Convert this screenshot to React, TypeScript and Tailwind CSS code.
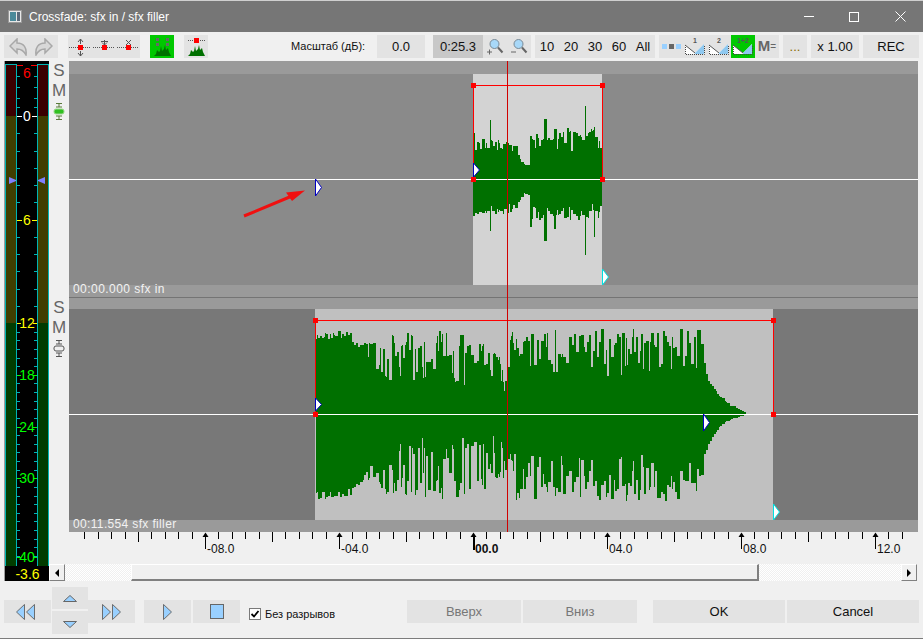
import * as React from "react";

type Pt = [number, number];

function lerpEnv(pts: Pt[], x: number) {
  if (x <= pts[0][0]) return pts[0][1];
  for (let i = 1; i < pts.length; i++) {
    if (x <= pts[i][0]) {
      const [x0, y0] = pts[i - 1];
      const [x1, y1] = pts[i];
      return y0 + ((y1 - y0) * (x - x0)) / (x1 - x0);
    }
  }
  return pts[pts.length - 1][1];
}

function rng(seed: number) {
  let a = seed;
  return () => {
    a = (a + 0x6d2b79f5) | 0;
    let t = Math.imul(a ^ (a >>> 15), 1 | a);
    t = (t + Math.imul(t ^ (t >>> 7), 61 | t)) ^ t;
    return ((t ^ (t >>> 14)) >>> 0) / 4294967296;
  };
}

interface WaveOpts {
  from: number;
  to: number;
  center: number;
  topLow: Pt[];
  topHigh: Pt[];
  botLow: Pt[];
  botHigh: Pt[];
  seed: number;
  notch: number;
  spikes?: [number, number, number][];
}

function amp(low: number, high: number, r1: number, r2: number, notch: number) {
  if (r1 < notch) return low + (high - low) * r2 * 0.4;
  return low + (high - low) * (0.45 + 0.55 * r2);
}

function wavePath(o: WaveOpts) {
  const r = rng(o.seed);
  let d = "";
  let x = o.from;
  while (x < o.to) {
    const w = Math.min(1 + Math.floor(r() * 2.4), o.to - x);
    let up = amp(lerpEnv(o.topLow, x), lerpEnv(o.topHigh, x), r(), r(), o.notch);
    let dn = amp(lerpEnv(o.botLow, x), lerpEnv(o.botHigh, x), r(), r(), o.notch);
    for (const s of o.spikes ?? []) {
      if (x <= s[0] && s[0] < x + w) {
        up = Math.max(up, s[1]);
        dn = Math.max(dn, s[2]);
      }
    }
    d += `M${x} ${Math.round(o.center - up)}h${w}V${Math.round(o.center + dn)}h${-w}z`;
    x += w;
  }
  return d;
}

const WAVE_A = wavePath({
  from: 473,
  to: 602,
  center: 179,
  seed: 11,
  notch: 0.15,
  topLow: [[473, 26], [490, 26], [515, 26], [522, 13], [529, 11], [530, 28], [598, 27], [602, 14]],
  topHigh: [[473, 42], [490, 42], [515, 34], [522, 16], [529, 14], [530, 50], [598, 52], [602, 20]],
  botLow: [[473, 24], [515, 24], [522, 14], [529, 14], [530, 22], [598, 22], [602, 14]],
  botHigh: [[473, 38], [515, 34], [522, 16], [529, 16], [530, 42], [598, 42], [602, 20]],
  spikes: [[474, 46, 32], [490, 59, 52], [530, 43, 48], [546, 60, 62], [554, 50, 50], [567, 44, 38], [585, 73, 76], [594, 52, 58]],
});

const WAVE_B = wavePath({
  from: 316,
  to: 746,
  center: 414,
  seed: 29,
  notch: 0.3,
  topLow: [[316, 74], [345, 76], [360, 62], [372, 46], [385, 32], [400, 34], [440, 30], [470, 27], [500, 24], [508, 22], [510, 50], [540, 38], [600, 38], [695, 42], [702, 48], [705, 40], [710, 28], [720, 16], [730, 8], [745, 2]],
  topHigh: [[316, 82], [345, 84], [360, 78], [372, 72], [385, 66], [390, 82], [420, 84], [470, 82], [500, 72], [505, 34], [510, 82], [530, 86], [700, 86], [702, 70], [705, 44], [710, 32], [720, 18], [730, 9], [745, 2]],
  botLow: [[316, 78], [345, 76], [360, 56], [375, 44], [400, 24], [455, 20], [500, 22], [508, 24], [512, 38], [600, 38], [695, 42], [702, 46], [705, 36], [710, 26], [720, 11], [730, 5], [745, 1]],
  botHigh: [[316, 85], [345, 85], [360, 76], [375, 66], [385, 80], [420, 87], [455, 84], [500, 70], [508, 62], [512, 86], [700, 88], [702, 66], [705, 40], [710, 28], [720, 12], [730, 6], [745, 1]],
});

function Marker({ x, y, h, color }: { x: number; y: number; h: number; color: string }) {
  return (
    <path
      d={`M${x + 0.5} ${y}V${y + h}L${x + 6.5} ${y + h / 2}z`}
      fill="#fff"
      stroke={color}
      strokeWidth="1"
    />
  );
}

function Handle({ x, y }: { x: number; y: number }) {
  return <rect x={x - 2.5} y={y - 2.5} width="5" height="5" fill="#ff0000" />;
}

function Band({ className }: { className: string }) {
  return <div className={className} />;
}

function Tracks() {
  return (
    <div className="relative flex h-[471px] w-[849px] flex-col">
      <Band className="h-[13px] bg-[#9a9a9a]" />
      <div className="flex h-[211px] bg-[#8a8a8a]">
        <div className="ml-[404px] w-[129px] bg-[#d3d3d3]" />
      </div>
      <div className="flex h-[12px] items-start bg-[#9a9a9a] pl-1 text-[12px] leading-[8px] tracking-[0.45px] text-[#f2f2f2]">
        00:00.000 sfx in
      </div>
      <Band className="h-px bg-[#747474]" />
      <Band className="h-[11px] bg-[#9a9a9a]" />
      <div className="flex h-[211px] bg-[#787878]">
        <div className="ml-[246px] w-[458px] bg-[#c0c0c0]" />
      </div>
      <div className="flex h-[12px] items-start bg-[#9a9a9a] pl-1 text-[12px] leading-[9px] tracking-[0.35px] text-[#f2f2f2]">
        00:11.554 sfx filler
      </div>
      <svg className="absolute inset-0" width="849" height="471" viewBox="69 61 849 471">
        <path d={WAVE_A} fill="#007000" shapeRendering="crispEdges" />
        <path d={WAVE_B} fill="#007000" shapeRendering="crispEdges" />
        <g shapeRendering="crispEdges">
          <rect x="69" y="179" width="849" height="1" fill="#fff" />
          <rect x="69" y="414" width="849" height="1" fill="#fff" />
          <path d="M473.5 179V85.5H602.5V179" fill="none" stroke="#ff0000" />
          <path d="M315.5 414V320.5H773.5V414" fill="none" stroke="#ff0000" />
          <rect x="507" y="61" width="1" height="471" fill="#d00000" />
        </g>
        <Handle x={473.5} y={85.5} />
        <Handle x={602.5} y={85.5} />
        <Handle x={473.5} y={179.5} />
        <Handle x={602.5} y={179.5} />
        <Handle x={315.5} y={320.5} />
        <Handle x={773.5} y={320.5} />
        <Handle x={315.5} y={414.5} />
        <Handle x={773.5} y={414.5} />
        <Marker x={315} y={179} h={17} color="#0000c0" />
        <Marker x={473} y={163} h={14} color="#0000c0" />
        <Marker x={602} y={269} h={16} color="#00e0e0" />
        <Marker x={315} y={398} h={13} color="#0000c0" />
        <Marker x={703} y={414} h={17} color="#0000c0" />
        <Marker x={773} y={504} h={16} color="#00e0e0" />
        <path d="M244 216L292 196" stroke="#f01010" strokeWidth="3" />
        <path d="M305 190.500L286 192.500L292 201z" fill="#f01010" />
      </svg>
    </div>
  );
}

const RULER_LABELS: [number, string, boolean][] = [
  [205, "-08.0", false],
  [339, "-04.0", false],
  [473, "00.0", true],
  [607, "04.0", false],
  [741, "08.0", false],
  [875, "12.0", false],
];

function Ruler() {
  const ticks: number[] = [];
  for (let i = -29; i < 33; i++) ticks.push(473 + i * 13.4);
  return (
    <svg width="869" height="32" viewBox="49 532 869 32" className="block">
      {ticks.map((x, i) => {
        const n = i - 29;
        if (n % 10 === 0) return null;
        return (
          <rect
            key={i}
            x={Math.round(x)}
            y="532"
            width="1"
            height={n % 5 === 0 ? 10 : 7}
            fill="#000"
            shapeRendering="crispEdges"
          />
        );
      })}
      {RULER_LABELS.map(([x, t, bold]) => (
        <g key={t}>
          <rect x={x} y="535" width={bold ? 2 : 1} height={bold ? 15 : 14} fill="#000" shapeRendering="crispEdges" />
          <path d={`M${x + 0.5} 532.500L${x + 3.5} 537H${x - 2.500}z`} fill="#000" />
          <text x={x + 2} y="553" fontSize="12" fontWeight={bold ? 700 : 400} fill="#111">
            {t}
          </text>
        </g>
      ))}
    </svg>
  );
}

function ScrollArrow({ dir }: { dir: "l" | "r" }) {
  return (
    <div className="flex h-[17px] w-[16px] items-center justify-center border-t border-l border-t-white border-l-white border-r border-b border-r-[#808080] border-b-[#808080] bg-[#f0f0f0]">
      <svg width="6" height="8" viewBox="0 0 6 8">
        <path d={dir === "l" ? "M5 0V8L1 4z" : "M1 0V8L5 4z"} fill="#000" />
      </svg>
    </div>
  );
}

function Scrollbar() {
  const dither = "h-[17px] bg-[repeating-conic-gradient(#ffffff_0_25%,#f0f0f0_0_50%)] bg-[length:2px_2px]";
  return (
    <div className="flex h-[17px] w-[868px]">
      <ScrollArrow dir="l" />
      <div className={`w-[66px] ${dither}`} />
      <div className="h-[17px] w-[628px] border-t border-l border-t-white border-l-white border-r-2 border-b-2 border-r-[#808080] border-b-[#808080] bg-[#f0f0f0]" />
      <div className={`w-[142px] ${dither}`} />
      <ScrollArrow dir="r" />
    </div>
  );
}

const METER_MARKS: [number, string, string][] = [
  [73, "6", "#ff0000"],
  [116, "0", "#ffffff"],
  [220, "6", "#ffff00"],
  [323, "12", "#ffff00"],
  [375, "18", "#00ff00"],
  [427, "24", "#00ff00"],
  [478, "30", "#00ff00"],
  [557, "40", "#00ff00"],
];

function MeterChannel() {
  return (
    <div className="flex h-[502px] w-[12px] flex-col border border-b-0 border-[#00b4b4]">
      <div className="h-[51px] bg-[#3a0000]" />
      <div className="h-[207px] bg-[#403e00]" />
      <div className="flex-1 bg-[#003c00]" />
    </div>
  );
}

function Meter() {
  const minor: number[] = [76, 87, 98, 107];
  for (let i = 1; i <= 12; i++) minor.push(116 + Math.round(i * 17.25));
  for (let i = 1; i <= 28; i++) minor.push(323 + Math.round(i * 8.63));
  return (
    <div className="ml-1 flex h-[520px] w-[45px] flex-col border-l border-[#9c9c9c] bg-black">
      <div className="relative flex h-[505px] justify-between pt-[3px]">
        <MeterChannel />
        <MeterChannel />
        <svg className="absolute inset-0" width="44" height="505" viewBox="5 61 44 505">
          <g fill="#ff0000" shapeRendering="crispEdges">
            <rect x="17" y="65" width="6" height="1" />
            <rect x="31" y="65" width="6" height="1" />
          </g>
          {minor.filter((y) => y < 562).map((y) => (
            <g key={y} fill="#00b4b4" shapeRendering="crispEdges">
              <rect x="17" y={y} width="3" height="1" />
              <rect x="34" y={y} width="3" height="1" />
            </g>
          ))}
          {METER_MARKS.map(([y, t, c]) => (
            <g key={y} fill={c}>
              {y > 100 ? (
                <g shapeRendering="crispEdges">
                  <rect x="17" y={y} width={t.length > 1 ? 4 : 5} height="1" />
                  <rect x={t.length > 1 ? 33 : 32} y={y} width={t.length > 1 ? 4 : 5} height="1" />
                </g>
              ) : null}
              <text x="27" y={y + 5} fontSize="14" textAnchor="middle">
                {t}
              </text>
            </g>
          ))}
          <path d="M9 177V184L16 181V180z" fill="#8080ff" />
          <path d="M45 177V184L38 181V180z" fill="#8080ff" />
        </svg>
      </div>
      <div className="flex h-[15px] items-center justify-center pt-[1px] pl-[1px] text-[14px] leading-[14px] text-[#ffff00]">-3.6</div>
    </div>
  );
}

function Fader({ active }: { active: boolean }) {
  return (
    <svg width="12" height="17" viewBox="0 0 12 17" className="mt-[2px]">
      <path d="M3 .5H9M6 .5V4M3 4H9M3 13H9M6 13V16.500M3 16.500H9" stroke={active ? "#5a7a3a" : "#555"} fill="none" />
      <rect x="1" y="6" width="10" height="5" rx="2" fill={active ? "#30c020" : "#f0f0f0"} stroke={active ? "#a0d890" : "#555"} />
    </svg>
  );
}

function SoloMute({ height, active }: { height: string; active: boolean }) {
  return (
    <div className={`flex w-[20px] flex-col items-center text-[17px] leading-[20px] text-[#666] ${height}`}>
      <div>S</div>
      <div>M</div>
      <Fader active={active} />
    </div>
  );
}

function ToolBtn({ className = "", children }: { className?: string; children?: React.ReactNode }) {
  return (
    <div className={`flex h-[23px] shrink-0 items-center justify-center ${className}`}>{children}</div>
  );
}

function Dots({ y }: { y: number }) {
  return <path d={`M1 ${y}H23`} stroke="#555" strokeDasharray="1 1" shapeRendering="crispEdges" />;
}

function EnvIcon({ kind }: { kind: "both" | "down" | "cross" }) {
  return (
    <svg width="24" height="23" viewBox="0 0 24 23">
      <Dots y={12.5} />
      <rect x="10" y="10" width="5" height="5" fill="#ff0000" />
      {kind === "both" && (
        <path d="M12.500 4V9M10 7L12.500 4L15 7M12.500 16V21M10 18L12.500 21L15 18" stroke="#555" fill="none" />
      )}
      {kind === "down" && <path d="M12.500 5V10M10 7.500L12.500 10L15 7.500M9 6.500H16" stroke="#555" fill="none" />}
      {kind === "cross" && <path d="M10 5L15 10M15 5L10 10" stroke="#555" fill="none" />}
    </svg>
  );
}

function Peaks({ y = 16 }: { y?: number }) {
  return (
    <path
      d={`M4 ${y + 4}L6 ${y + 2}L7 ${y - 2}L9 ${y}L10 ${y - 1}L11 ${y - 6}L12 ${y - 1}L14 ${y - 3}L15 ${y - 7}L16 ${y - 2}L18 ${y - 4}L19 ${y}L21 ${y + 4}z`}
      fill="#007000"
    />
  );
}

function PeakIcon({ squares }: { squares: boolean }) {
  return (
    <svg width="24" height="23" viewBox="0 0 24 23">
      <Peaks y={17} />
      {squares ? (
        <g fill="#666">
          <rect x="6" y="3" width="3" height="3" />
          <rect x="16" y="3" width="3" height="3" />
          <rect x="6" y="8" width="3" height="3" />
          <rect x="16" y="8" width="3" height="3" />
        </g>
      ) : (
        <>
          <path d="M4 5.500H21" stroke="#555" strokeDasharray="1 1" />
          <rect x="10" y="3" width="5" height="5" fill="#ff0000" />
        </>
      )}
    </svg>
  );
}

function ZoomIcon({ sign }: { sign: "+" | "-" }) {
  return (
    <svg width="18" height="17" viewBox="0 0 18 17">
      <circle cx="8.500" cy="6" r="4.500" fill="#a8d8f8" stroke="#7a8a96" />
      <path d="M12 9.500L16.500 14.500" stroke="#666" strokeWidth="2" />
      <path d={sign === "+" ? "M1 14H6M3.500 11.500V16.500" : "M1 14H6"} stroke="#666" />
    </svg>
  );
}

function XfadeIcon({ label }: { label: string }) {
  return (
    <svg width="22" height="20" viewBox="0 0 22 20">
      <path d="M1 8L11 16L20 7V17H1z" fill="#ffffff" />
      <path d="M11 16L20 7V17H11z" fill="#8ec8f0" />
      <path d="M1.500 8V17.500H20.500V8" fill="none" stroke="#444" strokeDasharray="1 1" />
      <path d="M1 8L11 16" stroke="#555" />
      <text x="11" y="6" fontSize="7" textAnchor="middle" fill="#555" fontWeight="700">
        {label}
      </text>
    </svg>
  );
}

function Toolbar() {
  const arrow = "M8 1L1 8L8 15V11C12 11 15 13 17 17C18 10 15 5 8 5z";
  return (
    <div className="flex h-[29px] items-center bg-[#f0f0f0] pl-1 text-[13px] text-[#111]">
      <ToolBtn className="w-[54px] gap-[8px] bg-[#e3e3e3]">
        <svg width="18" height="18" viewBox="0 0 18 18">
          <path d={arrow} fill="#d8d8d8" stroke="#a8a8a8" strokeWidth="1.500" />
        </svg>
        <svg width="18" height="18" viewBox="0 0 18 18" className="-scale-x-100">
          <path d={arrow} fill="#d8d8d8" stroke="#a8a8a8" strokeWidth="1.500" />
        </svg>
      </ToolBtn>
      <ToolBtn className="ml-[10px] w-[72px] bg-[#e3e3e3]">
        <EnvIcon kind="both" />
        <EnvIcon kind="down" />
        <EnvIcon kind="cross" />
      </ToolBtn>
      <ToolBtn className="ml-[10px] w-[24px] bg-[#00c800]">
        <PeakIcon squares />
      </ToolBtn>
      <ToolBtn className="ml-[10px] w-[24px] bg-[#e3e3e3]">
        <PeakIcon squares={false} />
      </ToolBtn>
      <div className="ml-[83px] w-[86px] text-[11px]">Масштаб (дБ):</div>
      <ToolBtn className="w-[48px] bg-[#e3e3e3]">0.0</ToolBtn>
      <ToolBtn className="ml-2 w-[50px] bg-[#c8c8c8]">0:25.3</ToolBtn>
      <ToolBtn className="w-[48px] gap-[6px] bg-[#e3e3e3]">
        <ZoomIcon sign="+" />
        <ZoomIcon sign="-" />
      </ToolBtn>
      <div className="ml-1 grid h-[23px] w-[120px] shrink-0 grid-cols-5 items-center bg-[#e3e3e3] text-center">
        <span>10</span>
        <span>20</span>
        <span>30</span>
        <span>60</span>
        <span>All</span>
      </div>
      <ToolBtn className="ml-1 w-[24px] gap-[2px] bg-[#e3e3e3]">
        <div className="h-[5px] w-[5px] bg-[#99d0ff]" />
        <div className="h-[5px] w-[5px] bg-[#666]" />
        <div className="h-[5px] w-[5px] bg-[#99d0ff]" />
      </ToolBtn>
      <ToolBtn className="w-[24px] bg-[#e3e3e3]">
        <XfadeIcon label="1" />
      </ToolBtn>
      <ToolBtn className="w-[24px] bg-[#e3e3e3]">
        <XfadeIcon label="2" />
      </ToolBtn>
      <ToolBtn className="w-[24px] bg-[#00c800]">
        <XfadeIcon label="1+2" />
      </ToolBtn>
      <ToolBtn className="w-[24px] items-center bg-[#e3e3e3] text-[#666]">
        <span className="text-[15px] font-bold">M</span>
        <span className="text-[10px]">=</span>
      </ToolBtn>
      <ToolBtn className="ml-1 w-[24px] bg-[#e3e3e3] text-[#8a6a00]">...</ToolBtn>
      <ToolBtn className="ml-1 w-[48px] bg-[#e3e3e3]">x 1.00</ToolBtn>
      <ToolBtn className="ml-1 w-[56px] bg-[#e3e3e3]">REC</ToolBtn>
    </div>
  );
}

function Tri({ dir, h = 16 }: { dir: "l" | "r"; h?: number }) {
  const d = dir === "r" ? "M.5 .5V17.500L8.500 9z" : "M8.500 .5V17.500L.5 9z";
  return (
    <svg width="9" height={h} viewBox="0 0 9 18" preserveAspectRatio="none">
      <path d={d} fill="#99d0ff" stroke="#666" />
    </svg>
  );
}

function FootBtn({ className = "", children }: { className?: string; children?: React.ReactNode }) {
  return (
    <div className={`flex h-[23px] shrink-0 items-center justify-center bg-[#e3e3e3] ${className}`}>{children}</div>
  );
}

function BottomBar() {
  return (
    <div className="flex h-[58px] items-center border-b border-[#7c7c7c] bg-[#f0f0f0] pt-[4px] pl-1 text-[13px]">
      <FootBtn className="w-[47px] gap-px pr-[5px]">
        <Tri dir="l" />
        <Tri dir="l" />
      </FootBtn>
      <div className="ml-px flex w-[36px] flex-col gap-[2px] self-start pt-[2px]">
        <div className="flex h-[22px] items-center justify-center bg-[#e3e3e3]">
          <svg width="14" height="7" viewBox="0 0 14 7">
            <path d="M7 .5L13.500 6.500H.5z" fill="#99d0ff" stroke="#666" />
          </svg>
        </div>
        <div className="flex h-[23px] items-center justify-center bg-[#e3e3e3] pt-[3px]">
          <svg width="14" height="7" viewBox="0 0 14 7">
            <path d="M7 6.500L13.500 .5H.5z" fill="#99d0ff" stroke="#666" />
          </svg>
        </div>
      </div>
      <FootBtn className="w-[47px] gap-px pr-[1px]">
        <Tri dir="r" />
        <Tri dir="r" />
      </FootBtn>
      <FootBtn className="ml-[9px] w-[47px]">
        <Tri dir="r" />
      </FootBtn>
      <FootBtn className="ml-[2px] w-[47px]">
        <div className="h-[15px] w-[14px] border border-[#666] bg-[#99d0ff]" />
      </FootBtn>
      <div className="ml-[9px] mt-[5px] flex h-[12px] w-[12px] items-center justify-center border border-[#7a7a7a] bg-white">
        <svg width="10" height="10" viewBox="0 0 10 10">
          <path d="M1.500 5L4 7.500L8.500 2" fill="none" stroke="#000" strokeWidth="1.800" />
        </svg>
      </div>
      <div className="ml-[4px] mt-[6px] w-[142px] text-[11px] text-[#111]">Без разрывов</div>
      <FootBtn className="w-[114px] text-[#777]">Вверх</FootBtn>
      <FootBtn className="ml-[2px] w-[114px] text-[#777]">Вниз</FootBtn>
      <FootBtn className="ml-[16px] w-[132px] text-[#111]">OK</FootBtn>
      <FootBtn className="ml-[2px] w-[132px] text-[#111]">Cancel</FootBtn>
    </div>
  );
}

function TitleBar() {
  return (
    <div className="flex h-[31px] items-center bg-[#767676] text-[12px] text-white">
      <svg width="14" height="13" viewBox="0 0 14 13" className="ml-[8px] mr-[7px]">
        <rect x=".5" y=".5" width="13" height="12" fill="#e8e8e8" stroke="#999" />
        <rect x="2" y="2" width="6" height="9" fill="#4a8a9a" />
        <rect x="9" y="2" width="3" height="9" fill="#5a6a7a" />
      </svg>
      <span>Crossfade: sfx in / sfx filler</span>
      <div className="ml-auto flex h-full">
        <div className="flex w-[45px] items-center justify-center">
          <div className="h-px w-[10px] bg-white" />
        </div>
        <div className="flex w-[46px] items-center justify-center">
          <div className="h-[10px] w-[10px] border border-white" />
        </div>
        <div className="flex w-[46px] items-center justify-center">
          <svg width="11" height="11" viewBox="0 0 11 11">
            <path d="M.5 .5L10.500 10.500M10.500 .5L.5 10.500" stroke="#fff" />
          </svg>
        </div>
      </div>
    </div>
  );
}

export default function App() {
  return (
    <div className="flex h-[639px] w-[923px] flex-col overflow-hidden bg-[#f0f0f0] font-[Liberation_Sans]">
      <div className="h-px bg-[#cfcfcf]" />
      <TitleBar />
      <Toolbar />
      <div className="flex h-[520px]">
        <Meter />
        <div className="flex w-[874px] flex-col">
          <div className="flex h-[471px]">
            <div className="flex w-[20px] flex-col">
              <SoloMute active height="h-[237px]" />
              <SoloMute active={false} height="h-[234px]" />
            </div>
            <Tracks />
          </div>
          <Ruler />
          <Scrollbar />
        </div>
      </div>
      <BottomBar />
    </div>
  );
}
